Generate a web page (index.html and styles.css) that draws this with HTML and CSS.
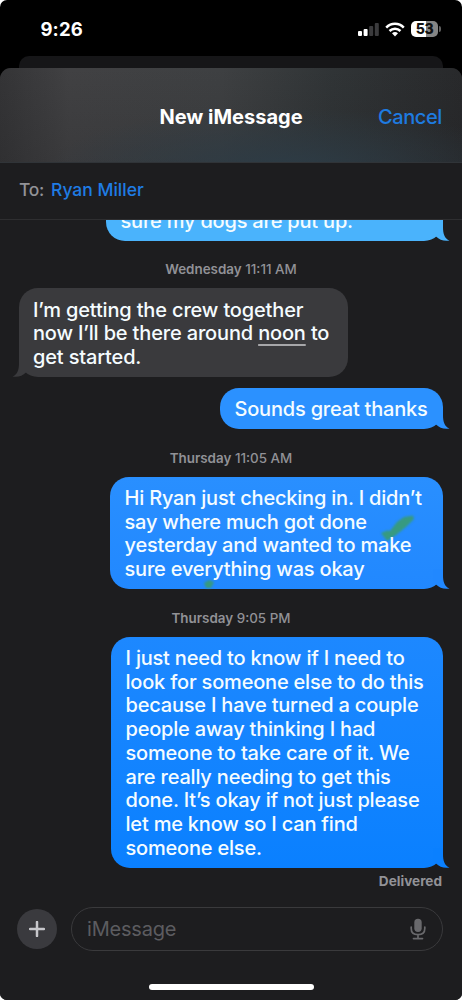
FILE: index.html
```html
<!DOCTYPE html>
<html lang="en">
<head>
<meta charset="utf-8">
<title>New iMessage</title>
<link rel="stylesheet" href="styles.css">
</head>
<body>
<svg class="defs" width="0" height="0" aria-hidden="true">
  <symbol id="tail" viewBox="0 0 26 20">
    <path d="M9 0H19V6C19 13 20.500 17.300 25.500 19.600C20 20.500 15.500 19 12 15.600L9 14Z"/>
  </symbol>
</svg>
<div class="phone">
  <header class="status">
    <span class="time">9:26</span>
    <div class="indicators">
      <svg class="signal" width="21" height="15" viewBox="0 0 21 15"><rect x="0" y="9" width="4" height="5" rx="1" fill="#fff"/><rect x="5.600" y="7" width="4" height="7" rx="1" fill="#fff"/><rect x="11.200" y="4" width="4" height="10" rx="1" fill="#3b3b3d"/><rect x="16.800" y="1" width="4" height="13" rx="1" fill="#3b3b3d"/></svg>
      <svg class="wifi" width="20" height="15" viewBox="0 0 20 15" fill="none" stroke="#fff" stroke-width="2.500"><path d="M1.200 5.600C6.200.600 13.800.600 18.800 5.600"/><path d="M4.500 9C7.700 5.900 12.300 5.900 15.500 9"/><path d="M7 11.300Q10 8.800 13 11.300L10 14.400Z" fill="#fff" stroke="none"/></svg>
      <div class="battery"><span class="level">53</span><i class="cap"></i></div>
    </div>
  </header>
  <div class="back-sheet"></div>
  <main class="sheet">
    <div class="title-bar"><h1>New iMessage</h1><a class="cancel">Cancel</a></div>
    <div class="recipient"><span class="to">To:</span><span class="name">Ryan Miller</span></div>
    <section class="thread">
      <div class="bubble out first"><p><span>sure my dogs are put up.</span></p><svg class="tail"><use href="#tail"/></svg></div>
      <div class="stamp s1"><b>Wednesday</b> 11:11 AM</div>
      <div class="bubble in"><p><span>I’m getting the crew together</span><span>now I’ll be there around <u>noon</u> to</span><span>get started.</span></p><svg class="tail"><use href="#tail"/></svg></div>
      <div class="bubble out thanks"><p><span>Sounds great thanks</span></p><svg class="tail"><use href="#tail"/></svg></div>
      <div class="stamp s2"><b>Thursday</b> 11:05 AM</div>
      <div class="bubble out checking"><p><span>Hi Ryan just checking in. I didn’t</span><span>say where much got done</span><span>yesterday and wanted to make</span><span>sure everything was okay</span></p><svg class="tail"><use href="#tail"/></svg>
        <svg class="marks" width="333" height="112" viewBox="0 0 333 112"><path d="M271 56L277 53.500L280 54L287 45L294 40L303 38.500L304 42L296 50L286 58L277 64L274 60Z"/><path d="M94 106l5-3 5 2-3 6h-5z"/></svg>
      </div>
      <div class="stamp s3"><b>Thursday</b> 9:05 PM</div>
      <div class="bubble out long"><p><span>I just need to know if I need to</span><span>look for someone else to do this</span><span>because I have turned a couple</span><span>people away thinking I had</span><span>someone to take care of it. We</span><span>are really needing to get this</span><span>done. It’s okay if not just please</span><span>let me know so I can find</span><span>someone else.</span></p><svg class="tail"><use href="#tail"/></svg></div>
      <div class="delivered">Delivered</div>
    </section>
    <footer class="composer">
      <div class="plus"><svg width="16" height="16" viewBox="0 0 16 16"><path d="M8 1V15M1 8H15" stroke="#c7c7cb" stroke-width="2.500" stroke-linecap="round"/></svg></div>
      <div class="field"><span>iMessage</span><svg width="16" height="22" viewBox="0 0 16 22" fill="none" stroke="#69696c" stroke-width="1.700" stroke-linecap="round"><rect x="4.300" y=".700" width="7.400" height="13.300" rx="3.700" fill="#69696c" stroke="none"/><path d="M1.200 9V10.500C1.200 14.500 4 16.700 8 16.700S14.800 14.500 14.800 10.500V9M8 17V20.500M3.500 20.600H12.500"/></svg></div>
    </footer>
    <div class="home"></div>
  </main>
</div>
</body>
</html>
```
FILE: styles.css
```css
* { box-sizing: border-box; }
body { margin: 0; background: #fff; font-family: Inter, "Liberation Sans", sans-serif; }
.defs { position: absolute; }
.phone { width: 462px; height: 1000px; background: #000; border-radius: 7px; overflow: hidden; display: flex; flex-direction: column; }
.status { height: 56px; flex: none; display: flex; justify-content: space-between; padding: 17px 24px 0 40.5px; color: #fff; }
.time { font-size: 18.5px; line-height: 25px; font-weight: 700; letter-spacing: .1px; }
.indicators { display: flex; gap: 6px; padding-top: 4px; height: 24px; }
.indicators svg { display: block; margin-top: 1px; }
.battery { width: 27px; height: 16px; border-radius: 5px; background: linear-gradient(90deg, #fff 54%, #858585 54%); position: relative; text-align: center; }
.level { display: block; color: #111; font-weight: 800; font-size: 14px; line-height: 16px; letter-spacing: -.3px; }
.cap { position: absolute; left: 28px; top: 5px; width: 2px; height: 6px; border-radius: 0 2px 2px 0; background: #606060; }
.back-sheet { height: 12px; flex: none; margin: 0 19px; border-radius: 10px 10px 0 0; background: #161618; }
.sheet { flex: 1; min-height: 0; background: #1d1d1f; border-radius: 11px 11px 0 0; overflow: hidden; display: flex; flex-direction: column; }
.title-bar { height: 95px; flex: none; display: grid; grid-template-columns: 1fr auto 1fr; align-items: center; padding: 3px 20px 0; border-bottom: 1px solid #303438;
  background: radial-gradient(ellipse 240px 62px at 62% 108%, #2d3c46 0%, #2d3c4600 100%), linear-gradient(180deg, #1d1d1f00, #1d1d1f30), linear-gradient(90deg, #343436 0%, #414143 15%, #3e4042 48%, #303436 72%, #28292b 100%); }
h1 { grid-column: 2; margin: 0; color: #fff; font-size: 20px; line-height: 26px; font-weight: 700; }
.cancel { justify-self: end; color: #1e7be0; font-size: 20px; line-height: 26px; font-weight: 550; letter-spacing: -.4px; }
.recipient { height: 57px; flex: none; display: flex; align-items: center; gap: 7px; padding: 0 19px 2px; border-bottom: 1px solid #2e2e30; font-size: 17.5px; line-height: 22px; font-weight: 500; }
.to { color: #929297; letter-spacing: -.3px; }
.name { color: #1f7ce4; }
.thread { height: 675px; flex: none; overflow: hidden; display: flex; flex-direction: column; }
.bubble { flex: none; position: relative; isolation: isolate; border-radius: 19px; color: #f5fcff; font-size: 20px; line-height: 23.7px; font-weight: 550; letter-spacing: -.2px; }
.bubble p { margin: 0; }
.bubble span { display: block; white-space: nowrap; width: max-content; }
.out { align-self: flex-end; margin-right: 19px; padding: 10px 15px 0 14.5px; }
.in { margin-left: 19px; width: 329px; height: 89px; padding: 10.5px 14px 0; background: #3a3a3d; letter-spacing: -.16px; }
.in u { text-decoration-color: #a6a6a9; text-decoration-thickness: 1.5px; text-underline-offset: 4px; }
.tail { position: absolute; z-index: -1; right: -7px; bottom: 0; width: 26px; height: 20px; fill: var(--tail); }
.in .tail { right: auto; left: -7px; transform: scaleX(-1); }
.in { --tail: #3a3a3d; }
.first { width: 337px; height: 41px; margin-top: -20px; background: #4ab3fc; --tail: #4ab3fc; }
.thanks { width: 223px; height: 41px; margin-top: 11px; background: #2b91ff; --tail: #2b91ff; }
.checking { width: 333px; height: 112px; background: linear-gradient(#298fff, #2188ff); --tail: #2188ff; }
.long { width: 332px; height: 231px; background: linear-gradient(#1d88ff, #0a80ff); --tail: #0a80ff; }
.marks { position: absolute; z-index: -1; inset: 0; fill: #379a80; filter: blur(.8px); }
.stamp { flex: none; text-align: center; color: #919196; font-size: 13.4px; font-weight: 500; line-height: 16px; }
.stamp b { font-weight: 600; }
.s1 { height: 47px; padding-top: 20px; }
.s2 { height: 48px; padding-top: 21px; }
.s3 { height: 48px; padding-top: 21px; }
.delivered { flex: none; color: #929297; font-size: 13.6px; font-weight: 700; line-height: 16px; margin: 5px 20px 0; text-align: right; }
.composer { flex: none; display: flex; align-items: center; gap: 14px; margin-top: 11px; padding: 0 19px 0 17px; height: 45px; }
.plus { width: 40px; height: 40px; border-radius: 50%; background: #3a3a3e; display: grid; place-items: center; }
.field { flex: 1; height: 44px; border: 1px solid #3a3a3c; border-radius: 22px; display: flex; align-items: center; justify-content: space-between; padding: 0 16px 0 15px; color: #5c5c60; font-size: 20px; letter-spacing: -.2px; }
.home { flex: none; width: 165px; height: 6px; border-radius: 3px; background: #fff; margin: 33px auto 0; }
```
